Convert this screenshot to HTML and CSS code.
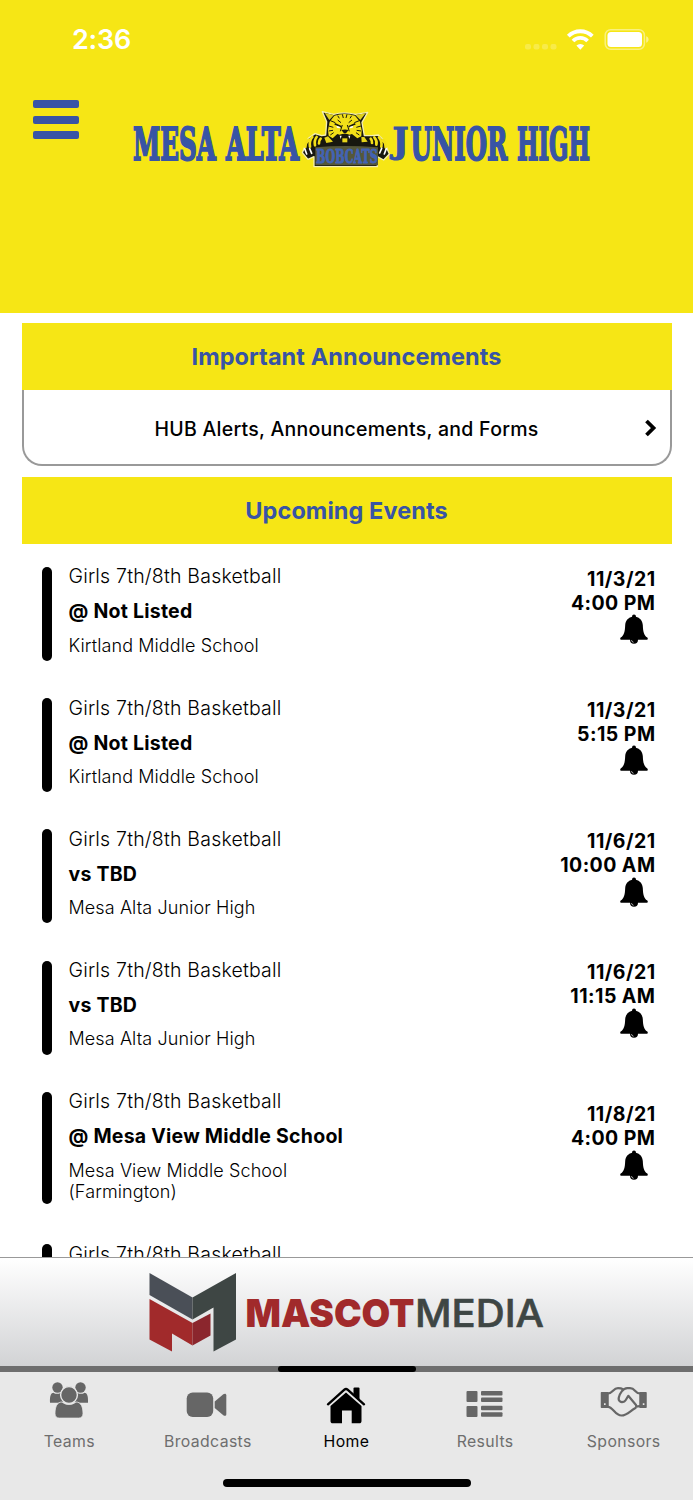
FILE: index.html
```
<!DOCTYPE html>
<html lang="en">
<head>
    <meta charset="UTF-8">
    <title>Mesa Alta Junior High</title>
    <link rel="stylesheet" href="styles.css">
</head>
<body>
    <svg width="0" height="0" class="defs">
        <symbol id="bell" viewBox="0 0 28 30">
            <path d="M14 .5a1.9 1.9 0 0 1 1.9 2.2c4 .9 6.6 4 6.9 8.200.3 6.600 1 10 4.500 12.700.900.900.500 2.100-.800 2.100H18a4 4 0 0 1-8 0H1.500C.200 25.700-.200 24.500.700 23.600 4.200 20.900 4.900 17.500 5.200 10.900c.3-4.200 2.900-7.300 6.900-8.200A1.900 1.900 0 0 1 14 .5z"/>
            <path d="M11.500 26.200a2.600 2.600 0 0 0 2 2.100" fill="none" stroke="#fff" stroke-width=".7"/>
        </symbol>
    </svg>

    <header class="header">
        <div class="status">
            <div class="time">2:36</div>
            <svg class="status-icons" width="126" height="24" viewBox="524 28 126 24" fill="#fff">
                <g opacity=".22">
                    <rect x="525" y="44" width="6" height="5.500" rx="2"/>
                    <rect x="533.500" y="44" width="6" height="5.500" rx="2"/>
                    <rect x="542" y="44" width="6" height="5.500" rx="2"/>
                    <rect x="550.500" y="44" width="6" height="5.500" rx="2"/>
                </g>
                <g fill="none" stroke="#fff" stroke-width="3.800">
                    <path d="M568.300 36.200a17 17 0 0 1 24 0"/>
                    <path d="M573 41a10.300 10.300 0 0 1 14.600 0"/>
                </g>
                <path d="M580.300 49.800l-3.900-4.200a5.800 5.800 0 0 1 7.800 0z"/>
                <rect x="605.200" y="29.700" width="39.200" height="19.600" rx="5.500" fill="none" stroke="#fff" stroke-width="1.500" opacity=".45"/>
                <rect x="607.500" y="32" width="34.500" height="15" rx="3.500"/>
                <path d="M646.200 36.300c3.200 1 3.200 5.400 0 6.400z" opacity=".5"/>
            </svg>
        </div>
        <div class="brand">
            <div class="menu">
                <span></span>
                <span></span>
                <span></span>
            </div>
            <svg class="wordmark" width="462" height="64" viewBox="131 106 462 64">
                <g class="wordmark-text">
                    <text x="133" y="159.600" textLength="83" lengthAdjust="spacingAndGlyphs">MESA</text>
                    <text x="226" y="159.600" textLength="73" lengthAdjust="spacingAndGlyphs">ALTA</text>
                    <text class="short-j" x="392.500" y="153" textLength="16" lengthAdjust="spacingAndGlyphs">J</text>
                    <text x="410.500" y="159.600" textLength="97" lengthAdjust="spacingAndGlyphs">UNIOR</text>
                    <text x="517" y="159.600" textLength="73" lengthAdjust="spacingAndGlyphs">HIGH</text>
                </g>
                <!-- bobcat -->
                <g transform="translate(290 105) scale(.3333)" stroke-linejoin="round">
                    <path d="M97 20l34 8q30-9 66 0l36-6-17 30 7 40 22 0 20-2 15 14 18 43-17 18-19-10v30H72v-30l-18 8-17-20 18-43 20-14 20 6 12-2 3-40z" fill="#17170f" stroke="#f4efb0" stroke-width="4"/>
                    <path d="M104 24l28 6-14 15zM227 25l-31 5 15 15z" fill="#ded01e"/>
                    <path d="M133 32q31-10 62 0l15 18 5 26-1 18-12 6-16-13-7 2q-15-6-30 0l-7-2-14 13-12-8-2-16 5-26z" fill="#f2df18"/>
                    <g fill="none" stroke="#17170f" stroke-width="3">
                        <path d="M157 28l3 11M171 28l-3 11M143 32l5 8M185 32l-5 8M121 47l15 6M208 47l-15 6M116 63l14 4M213 63l-14 4M116 78l13-2M213 78l-13-2M121 90l10-7M208 90l-10-7M157 60l-6 19M172 60l6 19M143 45l10 8M186 45l-10 8"/>
                        <path d="M134 56l20 9M196 56l-20 9" stroke-width="5"/>
                    </g>
                    <path d="M139 62l12 4-3 4-7-2zM190 62l-12 4 3 4 7-2z" fill="#fff"/>
                    <path d="M154 75q11-3 22 0l-8 10h-6z" fill="#17170f"/>
                    <path d="M146 93h38l-5 16h-28z" fill="#17170f"/>
                    <path d="M149 92l3 10 3-10zM181 92l-3 10-3-10z" fill="#fff"/>
                    <path d="M157 100h15v12h-15z" fill="#e8d619"/>
                    <path d="M103 98l11-4 15 16-20 4zM214 96l9 0 10 14-18 2z" fill="#e6d51a"/>
                    <g fill="none" stroke="#f2df18" stroke-width="8" stroke-linecap="round">
                        <path d="M56 104q-10 9-10 22M67 96q-10 12-7 29M80 96q-8 10-5 25M92 101q-6 6-5 14"/>
                        <path d="M279 105q9 9 8 22M267 97q10 12 7 28M253 97q9 10 6 22M242 101q5 6 4 13"/>
                    </g>
                    <g fill="none" stroke="#fff" stroke-width="5" stroke-linecap="round">
                        <path d="M44 131l6 16M59 131l6 14M289 131l-6 16M275 130l-6 14"/>
                    </g>
                    <path d="M76 127q88-8 188 0v54H76z" fill="#55573a"/>
                    <text class="bobcats" x="78" y="175" textLength="185" lengthAdjust="spacingAndGlyphs">BOBCATS</text>
                </g>
            </svg>
        </div>
    </header>

    <main class="content">
        <section class="announcements">
            <h2 class="section-title">Important Announcements</h2>
            <div class="announcement">
                <span>HUB Alerts, Announcements, and Forms</span>
                <svg class="chevron" width="13" height="18" viewBox="0 0 13 18">
                    <path d="M2.500 2l7 7-7 7" fill="none" stroke="#000" stroke-width="3.800"/>
                </svg>
            </div>
        </section>
        <section class="events">
            <h2 class="section-title">Upcoming Events</h2>
            <div class="event">
                <div class="marker"></div>
                <div class="details">
                    <div class="sport">Girls 7th/8th Basketball</div>
                    <div class="opponent">@ Not Listed</div>
                    <div class="place">Kirtland Middle School</div>
                </div>
                <div class="when">
                    <div>11/3/21</div>
                    <div>4:00 PM</div>
                    <svg class="bell"><use href="#bell"/></svg>
                </div>
            </div>
            <div class="event">
                <div class="marker"></div>
                <div class="details">
                    <div class="sport">Girls 7th/8th Basketball</div>
                    <div class="opponent">@ Not Listed</div>
                    <div class="place">Kirtland Middle School</div>
                </div>
                <div class="when">
                    <div>11/3/21</div>
                    <div>5:15 PM</div>
                    <svg class="bell"><use href="#bell"/></svg>
                </div>
            </div>
            <div class="event">
                <div class="marker"></div>
                <div class="details">
                    <div class="sport">Girls 7th/8th Basketball</div>
                    <div class="opponent">vs TBD</div>
                    <div class="place">Mesa Alta Junior High</div>
                </div>
                <div class="when">
                    <div>11/6/21</div>
                    <div>10:00 AM</div>
                    <svg class="bell"><use href="#bell"/></svg>
                </div>
            </div>
            <div class="event">
                <div class="marker"></div>
                <div class="details">
                    <div class="sport">Girls 7th/8th Basketball</div>
                    <div class="opponent">vs TBD</div>
                    <div class="place">Mesa Alta Junior High</div>
                </div>
                <div class="when">
                    <div>11/6/21</div>
                    <div>11:15 AM</div>
                    <svg class="bell"><use href="#bell"/></svg>
                </div>
            </div>
            <div class="event tall">
                <div class="marker"></div>
                <div class="details">
                    <div class="sport">Girls 7th/8th Basketball</div>
                    <div class="opponent">@ Mesa View Middle School</div>
                    <div class="place">Mesa View Middle School<br>(Farmington)</div>
                </div>
                <div class="when">
                    <div>11/8/21</div>
                    <div>4:00 PM</div>
                    <svg class="bell"><use href="#bell"/></svg>
                </div>
            </div>
            <div class="event">
                <div class="marker"></div>
                <div class="details">
                    <div class="sport">Girls 7th/8th Basketball</div>
                </div>
            </div>
        </section>
    </main>

    <div class="sponsor">
        <svg width="400" height="84" viewBox="147 1270 400 84">
            <path d="M149.500 1273l43 24.500v22l-43-24.500z" fill="#4a4f57"/>
            <path d="M192.500 1297.500l43.500-24.500v66.500l-22.500 12v-44l-21 12z" fill="#3e4644"/>
            <path d="M149.500 1299l43 24v22.500l-20.500-12v18l-22.500-12z" fill="#a12a2b"/>
            <path d="M192.500 1323l18-9.500v22l-18 10z" fill="#8b262d"/>
            <text class="mascot" x="245.500" y="1326.500" textLength="169" lengthAdjust="spacingAndGlyphs">MASCOT</text>
            <text class="media" x="415" y="1326.500" textLength="129" lengthAdjust="spacingAndGlyphs">MEDIA</text>
        </svg>
    </div>

    <nav class="tabs">
        <div class="indicator"><span></span></div>
        <div class="tab-row">
            <div class="tab">
                <svg width="48" height="48" viewBox="0 0 48 48" fill="#666">
                    <circle cx="12.500" cy="15.500" r="5.200"/>
                    <circle cx="35.500" cy="15.500" r="5.200"/>
                    <path d="M5 30.800c-.3-6 .5-9.800 3.500-10.100 1.800 1.500 5 1.500 7 .3.500 4 2 7 4.500 8.300-1.500.300-2.500.900-3.300 1.500zM43 30.800c.3-6-.5-9.800-3.500-10.100-1.800 1.500-5 1.500-7 .3-.5 4-2 7-4.500 8.300 1.500.300 2.500.900 3.300 1.500z"/>
                    <path d="M17 30c4 3.400 10 3.400 14 0 5 0 7 5 7 11.300 0 3-1.200 4.800-4.500 4.800h-19c-3.300 0-4.500-1.800-4.500-4.800C10 35 12 30 17 30z" stroke="#e8e8e8" stroke-width=".8"/>
                    <circle cx="24" cy="23" r="8.400" stroke="#e8e8e8" stroke-width="1.400"/>
                </svg>
                <span>Teams</span>
            </div>
            <div class="tab">
                <svg width="48" height="48" viewBox="0 0 48 48" fill="#666">
                    <rect x="2.700" y="20.500" width="26.500" height="24.500" rx="6"/>
                    <path d="M30.700 29.500l8.600-7.300c1.500-1 3-.6 3 1v19.100c0 1.600-1.500 2-3 1l-8.600-7.300z"/>
                </svg>
                <span>Broadcasts</span>
            </div>
            <div class="tab active">
                <svg width="48" height="48" viewBox="0 0 48 48">
                    <path d="M24 20.500L39.500 34v15c0 1.500-.8 2.300-2.300 2.300h-7.500V38.600H20v12.700h-9.200c-1.500 0-2.300-.8-2.300-2.300V34z"/>
                    <path d="M6 32.300L22.400 17.700q1.600-1.400 3.200 0L42 32.300" fill="none" stroke="#000" stroke-width="2.400" stroke-linecap="round"/>
                    <path d="M31.500 16.500q0-1 1-1h4q1 0 1 1v12l-6-5.500z"/>
                </svg>
                <span>Home</span>
            </div>
            <div class="tab">
                <svg width="48" height="48" viewBox="0 0 48 48" fill="#666">
                    <rect x="5.500" y="19" width="11" height="11" rx="1"/>
                    <rect x="5.500" y="34" width="11" height="11" rx="1"/>
                    <rect x="20" y="19" width="21.500" height="4.500" rx="1"/>
                    <rect x="20" y="25.500" width="21.500" height="4.500" rx="1"/>
                    <rect x="20" y="33.700" width="21.500" height="4.500" rx="1"/>
                    <rect x="20" y="40.300" width="21.500" height="4.500" rx="1"/>
                </svg>
                <span>Results</span>
            </div>
            <div class="tab">
                <svg width="48" height="48" viewBox="0 0 48 48" fill="none" stroke="#666" stroke-width="2.200" stroke-linejoin="round">
                    <path d="M1.500 20.800H8v14.500H1.500zM40 20.800h6v14.500H40z" fill="#666" stroke-width="1.500"/>
                    <path d="M8 21.500c5 0 5-5.300 10-5.300 2 0 3.500.2 5 1.100M8 34.800c5 0 7 8.700 13.500 8.700 5.500 0 9-5 14-7.500 1-1 1-2 .5-3L28.300 23.800c-1.500 2-2.300 4.700-4 5.700-3.500 1.500-6.300-.5-5.500-4 1-4 4-9.300 8.500-9.300H30c5.500 0 5 5.300 10 5.300M35.500 35c2-.8 3-.8 4.500-.8"/>
                    <path d="M4 32.200h1.600M42.800 32.200h1.600" stroke="#e8e8e8" stroke-width="1.800"/>
                </svg>
                <span>Sponsors</span>
            </div>
        </div>
        <div class="home-bar"></div>
    </nav>
</body>
</html>
```
FILE: styles.css
```
* {box-sizing: border-box;}
body {
    margin: 0;
    height: 1500px;
    display: flex;
    flex-direction: column;
    overflow: hidden;
    background: #fff;
    color: #000;
    font-family: Inter, "Liberation Sans", sans-serif;
}
.defs {
    display: none;
}
.header {
    height: 312.5px;
    flex: none;
    background: #f6e615;
}
.status {
    display: flex;
    justify-content: space-between;
    padding: 28px 43px 0 72px;
    height: 100px;
}
.time {
    color: #fff;
    font-size: 27px;
    font-weight: 600;
    line-height: 24px;
    letter-spacing: -.2px;
}
.brand {
    display: flex;
    gap: 52px;
    padding-left: 32.5px;
}
.menu {
    width: 46.5px;
    display: flex;
    flex-direction: column;
    gap: 7.5px;
}
.menu span {
    height: 8px;
    border-radius: 2px;
    background: #3854a5;
}
.wordmark {
    margin-top: 6px;
    overflow: visible;
}
.wordmark-text {
    fill: #3854a5;
    stroke: #3854a5;
    stroke-width: 2;
    font: bold 45px "DejaVu Serif", serif;
}
.short-j {
    font-size: 35px;
    stroke-width: 1.2;
}
.bobcats {
    fill: #4263b4;
    stroke: #4263b4;
    stroke-width: 3;
    font: bold 57px "DejaVu Serif", serif;
}
.content {
    height: 944.5px;
    flex: none;
    padding: 10.5px 21.5px 0;
    overflow: hidden;
}
.section-title {
    margin: 0;
    background: #f6e615;
    color: #3854a5;
    font-size: 23.5px;
    font-weight: 650;
    line-height: 68px;
    height: 67px;
    text-align: center;
    letter-spacing: .07px;
}
.announcement {
    display: flex;
    align-items: center;
    justify-content: center;
    position: relative;
    height: 76px;
    margin-bottom: 11px;
    border: 2px solid #999;
    border-top: 0;
    border-radius: 0 0 20px 20px;
    font-size: 19.5px;
    font-weight: 500;
    letter-spacing: .26px;
}
.announcement span {
    padding-top: 3px;
}
.chevron {
    position: absolute;
    right: 12.5px;
    top: 29px;
}
.events .section-title {
    margin-bottom: 4px;
}
.event {
    display: flex;
    height: 131.2px;
    padding: 19px 16px 18.2px 20.5px;
}
.event.tall {
    height: 152.7px;
}
.marker {
    width: 10px;
    height: 94px;
    border-radius: 5px;
    background: #000;
}
.tall .marker {
    height: 112.5px;
}
.details {
    flex: 1;
    margin: -.7px 0 0 16.5px;
    font-weight: 300;
    letter-spacing: .2px;
    white-space: nowrap;
}
.sport {
    font-size: 19.5px;
    line-height: 20px;
}
.opponent {
    margin-top: 15px;
    font-size: 19.5px;
    font-weight: 700;
    line-height: 20px;
    letter-spacing: .24px;
}
.place {
    margin-top: 13.5px;
    font-size: 18px;
    line-height: 21.5px;
    letter-spacing: .1px;
}
.when {
    align-self: center;
    margin-top: -16px;
    font-size: 19.5px;
    font-weight: 650;
    line-height: 23.7px;
    text-align: right;
    letter-spacing: .45px;
}
.bell {
    display: block;
    width: 28px;
    height: 30px;
    margin: -1px 8px 0 auto;
}
.sponsor {
    height: 109px;
    flex: none;
    display: flex;
    justify-content: center;
    align-items: center;
    border-top: 1.5px solid #999;
    background: linear-gradient(#fff, #d2d3d5);
}
.mascot {
    fill: #a12a2b;
    font: 900 39px Inter, sans-serif;
}
.media {
    fill: #3e4644;
    stroke: #3e4644;
    stroke-width: .6;
    font: 500 38.5px Inter, sans-serif;
}
.tabs {
    height: 134px;
    flex: none;
    background: #e8e8e8;
}
.indicator {
    height: 6px;
    background: #6e6e6e;
}
.indicator span {
    display: block;
    width: 138px;
    height: 6px;
    margin: 0 auto;
    border-radius: 3px;
    background: #000;
}
.tab-row {
    display: grid;
    grid-template-columns: repeat(5, 1fr);
    height: 106.5px;
}
.tab {
    display: flex;
    flex-direction: column;
    align-items: center;
    color: #6e6e6e;
    font-size: 15.8px;
    line-height: 20px;
    letter-spacing: .37px;
}
.tab svg {
    margin-bottom: 12px;
    overflow: visible;
}
.tab.active {
    color: #000;
}
.home-bar {
    width: 248px;
    height: 8px;
    margin: 0 auto;
    border-radius: 4px;
    background: #000;
}
```
